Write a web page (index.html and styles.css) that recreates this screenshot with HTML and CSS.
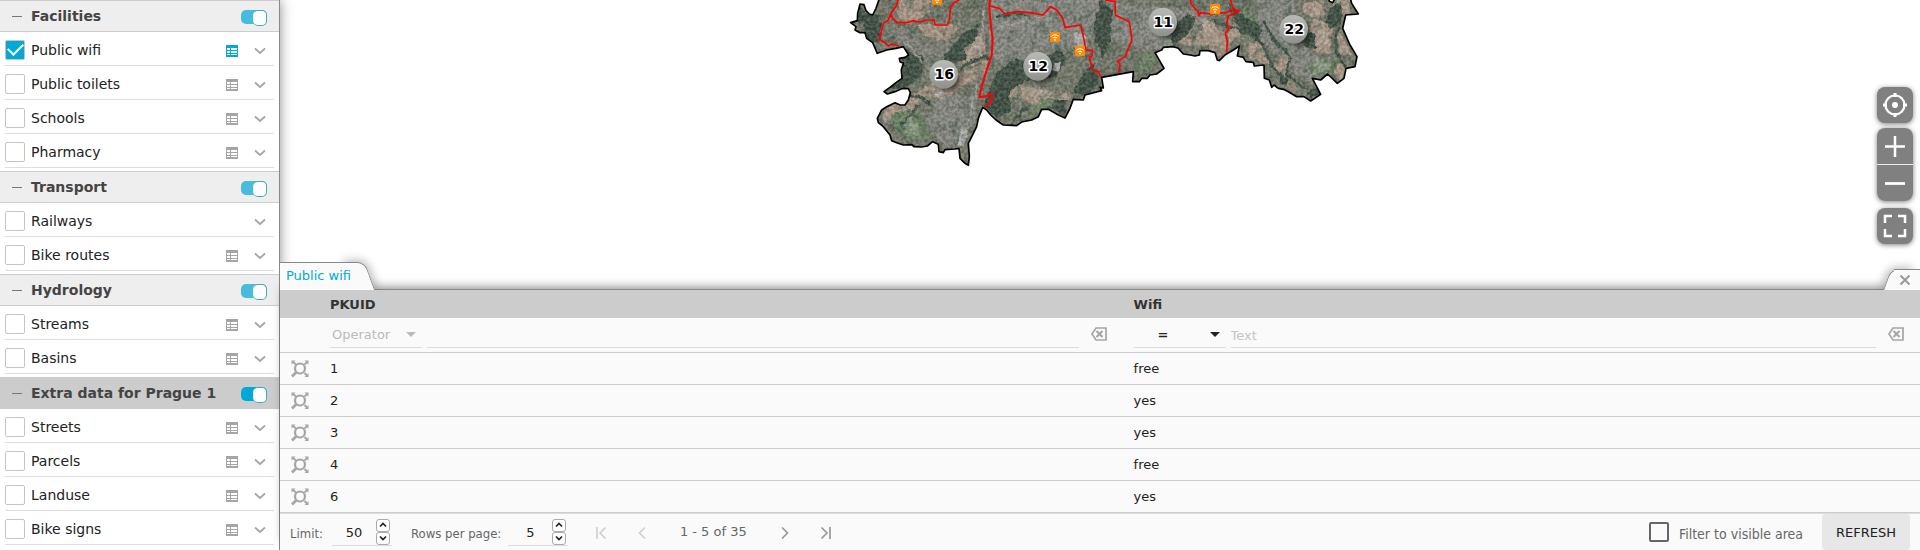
FILE: index.html
```html
<!DOCTYPE html>
<html lang="en">
<head>
<meta charset="utf-8">
<title>Prague map</title>
<link rel="stylesheet" href="styles.css">
</head>
<body>
<svg class="defs" aria-hidden="true">
  <symbol id="i-table" viewBox="0 0 12 12"><path d="M0 0h12v12H0zM1 3v2h3V3zM5 3v2h6V3zM1 6v2h3V6zM5 6v2h6V6zM1 9v1h3V9zM5 9v1h6V9z" fill="currentColor" fill-rule="evenodd"/></symbol>
  <symbol id="i-down" viewBox="0 0 12 8"><path d="M1 1.500l5 4.500 5-4.500" fill="none" stroke="currentColor" stroke-width="1.700"/></symbol>
  <symbol id="i-zoom" viewBox="0 0 18 18"><circle cx="9" cy="8.500" r="5" fill="none" stroke="currentColor" stroke-width="2.200"/><path d="M5.500 12L1 16.500" stroke="currentColor" stroke-width="2.800"/><path d="M.5.500h4L.5 4.500zM17.500.500h-4l4 4zM17.500 17h-4l4-4z" fill="currentColor"/><path d="M2 2l3 2.500M16.500 2l-3 2.500M16.500 16l-3-3" stroke="currentColor" stroke-width="2"/></symbol>
  <symbol id="i-clear" viewBox="0 0 16 14"><path d="M5 1h10v12H5L1 7z" fill="none" stroke="currentColor" stroke-width="1.700"/><path d="M5.500 4l6 6m0-6l-6 6" stroke="currentColor" stroke-width="2"/></symbol>
  <symbol id="i-caret-up" viewBox="0 0 8 6"><path d="M1 4.500l3-3 3 3" fill="none" stroke="currentColor" stroke-width="1.700"/></symbol>
  <symbol id="i-caret-down" viewBox="0 0 8 6"><path d="M1 1.500l3 3 3-3" fill="none" stroke="currentColor" stroke-width="1.700"/></symbol>
  <symbol id="i-first" viewBox="0 0 12 14"><path d="M2 1v12M10.500 1.500L5 7l5.500 5.500" fill="none" stroke="currentColor" stroke-width="1.500"/></symbol>
  <symbol id="i-prev" viewBox="0 0 12 14"><path d="M9 1.500L3.500 7 9 12.500" fill="none" stroke="currentColor" stroke-width="1.500"/></symbol>
  <symbol id="i-next" viewBox="0 0 12 14"><path d="M3 1.500L8.500 7 3 12.500" fill="none" stroke="currentColor" stroke-width="1.700"/></symbol>
  <symbol id="i-last" viewBox="0 0 12 14"><path d="M10 1v12M1.500 1.500L7 7l-5.500 5.500" fill="none" stroke="currentColor" stroke-width="1.700"/></symbol>
</svg>

<aside class="layers">
  <section class="group">
    <header class="group-head"><button class="fold" aria-label="Collapse"></button><h2>Facilities</h2><input class="toggle" type="checkbox" aria-label="Show Facilities" checked></header>
    <ul>
      <li class="layer"><input class="check" type="checkbox" id="l1" checked><label for="l1">Public wifi</label><button class="icon-btn active" aria-label="Table"><svg class="i12"><use href="#i-table"/></svg></button><button class="icon-btn" aria-label="More"><svg class="i-chev"><use href="#i-down"/></svg></button></li>
      <li class="layer"><input class="check" type="checkbox" id="l2"><label for="l2">Public toilets</label><button class="icon-btn" aria-label="Table"><svg class="i12"><use href="#i-table"/></svg></button><button class="icon-btn" aria-label="More"><svg class="i-chev"><use href="#i-down"/></svg></button></li>
      <li class="layer"><input class="check" type="checkbox" id="l3"><label for="l3">Schools</label><button class="icon-btn" aria-label="Table"><svg class="i12"><use href="#i-table"/></svg></button><button class="icon-btn" aria-label="More"><svg class="i-chev"><use href="#i-down"/></svg></button></li>
      <li class="layer"><input class="check" type="checkbox" id="l4"><label for="l4">Pharmacy</label><button class="icon-btn" aria-label="Table"><svg class="i12"><use href="#i-table"/></svg></button><button class="icon-btn" aria-label="More"><svg class="i-chev"><use href="#i-down"/></svg></button></li>
    </ul>
  </section>
  <section class="group">
    <header class="group-head"><button class="fold" aria-label="Collapse"></button><h2>Transport</h2><input class="toggle" type="checkbox" aria-label="Show Transport" checked></header>
    <ul>
      <li class="layer"><input class="check" type="checkbox" id="l5"><label for="l5">Railways</label><button class="icon-btn" aria-label="More"><svg class="i-chev"><use href="#i-down"/></svg></button></li>
      <li class="layer"><input class="check" type="checkbox" id="l6"><label for="l6">Bike routes</label><button class="icon-btn" aria-label="Table"><svg class="i12"><use href="#i-table"/></svg></button><button class="icon-btn" aria-label="More"><svg class="i-chev"><use href="#i-down"/></svg></button></li>
    </ul>
  </section>
  <section class="group">
    <header class="group-head"><button class="fold" aria-label="Collapse"></button><h2>Hydrology</h2><input class="toggle" type="checkbox" aria-label="Show Hydrology" checked></header>
    <ul>
      <li class="layer"><input class="check" type="checkbox" id="l7"><label for="l7">Streams</label><button class="icon-btn" aria-label="Table"><svg class="i12"><use href="#i-table"/></svg></button><button class="icon-btn" aria-label="More"><svg class="i-chev"><use href="#i-down"/></svg></button></li>
      <li class="layer"><input class="check" type="checkbox" id="l8"><label for="l8">Basins</label><button class="icon-btn" aria-label="Table"><svg class="i12"><use href="#i-table"/></svg></button><button class="icon-btn" aria-label="More"><svg class="i-chev"><use href="#i-down"/></svg></button></li>
    </ul>
  </section>
  <section class="group">
    <header class="group-head selected"><button class="fold" aria-label="Collapse"></button><h2>Extra data for Prague 1</h2><input class="toggle" type="checkbox" aria-label="Show Extra data for Prague 1" checked></header>
    <ul>
      <li class="layer"><input class="check" type="checkbox" id="l9"><label for="l9">Streets</label><button class="icon-btn" aria-label="Table"><svg class="i12"><use href="#i-table"/></svg></button><button class="icon-btn" aria-label="More"><svg class="i-chev"><use href="#i-down"/></svg></button></li>
      <li class="layer"><input class="check" type="checkbox" id="l10"><label for="l10">Parcels</label><button class="icon-btn" aria-label="Table"><svg class="i12"><use href="#i-table"/></svg></button><button class="icon-btn" aria-label="More"><svg class="i-chev"><use href="#i-down"/></svg></button></li>
      <li class="layer"><input class="check" type="checkbox" id="l11"><label for="l11">Landuse</label><button class="icon-btn" aria-label="Table"><svg class="i12"><use href="#i-table"/></svg></button><button class="icon-btn" aria-label="More"><svg class="i-chev"><use href="#i-down"/></svg></button></li>
      <li class="layer"><input class="check" type="checkbox" id="l12"><label for="l12">Bike signs</label><button class="icon-btn" aria-label="Table"><svg class="i12"><use href="#i-table"/></svg></button><button class="icon-btn" aria-label="More"><svg class="i-chev"><use href="#i-down"/></svg></button></li>
    </ul>
  </section>
</aside>

<main class="main">
  <div class="map">
    <svg class="city" viewBox="-60 0 1680 525" role="img" aria-label="Map of Prague districts">
      <defs>
        <path id="outline" d="M120-10L108 25 98 45 88 42 78 32 72 14 60 12 53 40 52 62 32 68 48 80 45 90 60 98 75 98 80 115 98 128 112 160 140 150 168 145 190 140 206 165 195 172 178 175 180 185 190 190 184 210 186 235 165 250 150 262 132 275 142 282 165 275 185 266 205 266 211 278 205 300 195 315 180 315 165 308 140 320 125 330 112 355 115 368 128 378 150 405 155 422 170 428 190 435 215 434 222 440 245 441 262 438 278 425 295 433 297 455 310 458 315 449 345 447 357 445 360 475 375 490 385 496 388 470 385 430 400 400 410 380 415 355 428 322 440 330 452 345 468 360 490 375 530 377 545 366 575 360 595 350 605 328 625 328 655 345 675 354 690 325 700 298 730 300 735 285 785 272 780 262 790 264 785 232 880 215 878 245 898 245 905 235 922 235 930 225 950 222 972 205 945 158 965 150 970 142 1000 140 1015 145 1030 162 1050 165 1065 168 1078 165 1080 152 1105 152 1125 158 1132 180 1138 182 1155 165 1180 150 1198 138 1192 168 1210 172 1218 185 1240 187 1243 198 1272 195 1273 235 1288 240 1295 262 1302 255 1315 265 1330 268 1345 275 1370 290 1392 290 1412 303 1442 283 1417 235 1442 240 1463 222 1492 250 1512 235 1518 205 1545 200 1551 170 1530 135 1508 85 1517 45 1555 42 1535 10 1530-10 1485-5 1478 8 1468 4 1465-10Z"/>
        <clipPath id="land"><use href="#outline"/></clipPath>
        <filter id="rough" x="-5%" y="-5%" width="110%" height="110%"><feTurbulence type="fractalNoise" baseFrequency=".05" numOctaves="4" seed="4" result="n"/><feDisplacementMap in="SourceGraphic" in2="n" scale="18" xChannelSelector="R" yChannelSelector="G"/></filter>
        <filter id="speck" x="0" y="0" width="100%" height="100%" color-interpolation-filters="sRGB"><feTurbulence type="fractalNoise" baseFrequency=".11" numOctaves="2" seed="8"/><feColorMatrix values="2.400 0 0 0 -.7  2.400 0 0 0 -.7  2.400 0 0 0 -.72  0 0 0 0 .15"/></filter>
        <filter id="mottle" x="0" y="0" width="100%" height="100%" color-interpolation-filters="sRGB"><feTurbulence type="fractalNoise" baseFrequency=".03" numOctaves="4" seed="21"/><feColorMatrix values="0 0 0 0 .25  0 0 0 0 .33  0 0 0 0 .26  5 0 0 0 -2.600"/></filter>
        <filter id="soft" x="-50%" y="-50%" width="200%" height="200%"><feGaussianBlur stdDeviation="7"/></filter>
        <linearGradient id="ball" x1="0" y1="0" x2="0" y2="1"><stop offset="0" stop-color="#b9bbb6"/><stop offset="1" stop-color="#8e908c"/></linearGradient>
        <g id="wifi"><rect width="30" height="30" rx="3" fill="#ff8a00"/><path d="M4 13q11-10 22 0M8.500 18q6.500-6 13 0" fill="none" stroke="#fff" stroke-width="3"/><circle cx="15" cy="23" r="2.800" fill="#fff"/></g>
      </defs>
      <g clip-path="url(#land)">
        <rect x="0" y="-10" width="1600" height="520" fill="#74786a"/>
        <g filter="url(#rough)">
          <path fill="#858780" d="M450 0h350l90 20 110 0 120 20-70 60-80 50-90-10-110-40-50 60-100-20-80 50-90 0zM300 290l110-10-10 100-80 60-70-60zM1250 0h110l20 120 50 60-10 70-90-50-70-90z"/>
          <path fill="#7f8076" d="M160 70l80 30 20 60-30 80-30-20 10-50-50-60zM250 130l130 0-20 60-100 20z"/>
          <path fill="#a89686" d="M180 0l90 0-10 50-60 20-30-20zM230 75l130-5-40 55-60-15zM380 140l50-50 10 70-40 40-40-10 0-30zM440 180l0 45-70 30-50 40-60 5-40-15 60-40 80-20zM210 290l40 0-30 40-60 20-30 20-5-40zM500 265l30-5 0 30-25 0zM540 255l90 20-30 45-50-20zM640 270l60 15-20 25-50-15zM1075 90l50-20 10 40-40 30-30-5zM1005 90l50 0 0 50-40-10zM1130 90l30 5 0 60-30 20-20-30zM1165 60l35 0 0 50-30 15zM1420 55l60 20-10 85-50-5-15-50zM1395 5l60 0-5 45-60-10zM1490 0l40 0 0 40-30 5zM1200 110l70 30 20 55-60-20zM1310 180l40-10-10 60-40-20zM1485 190l30 10-10 45-25-20zM1490 90l20 20 30 60-40-10zM1330 240l35 10 10 35-35-10z"/>
          <path fill="#b8a698" d="M285 215l60-10 20 30-90 40zM390 130l30-10 0 40-35 5zM595 260l40 15-15 30-30-20zM1430 85l40 10-5 40-35-10zM1085 60l40 0-5 35-30 5zM1415 20l30 5-5 25-30-5z"/>
          <path fill="#6b8163" d="M150 345l60-15 40 20 20 70-60 0-50-30zM600 290l50 10 20 40-60-15zM1410 190l50-20 40 15-20 30-60 20zM1200 20l50 30 10 50-50-30zM560 330l40-25 10 20-40 25zM900 160l60 0-20 40-50 20z"/>
          <path fill="#8a9982" d="M190 360l40-10 10 60-40-10zM1425 175l50-5-5 35-50 20zM1480 5l25 0-10 40-20-10zM980 110l30 0 0 25-40 5z"/>
          <path fill="#3a4b41" d="M75 50l50 20 0 40-30 30-25-50zM180 150l70 20 0 50-60 50-40-10 40-50-5-40zM60 10l20 30 40 5-10 30-60-5zM310 170l60-70 50-30-10 40-40 40 10 25-60 30zM470 215l60-40 60 20 70-50 20 40-40 50-90 10-40 30 0 60-40 20-40-40zM700 270l40-60 20-20 20 60-50 40zM780 0l40 30-10 90-20 60-30-80zM990 100l50-60 30 10-20 50-50 40zM640 300l45 0-15 45-30-10zM1390 100l35 0 0 50-30-10zM1400 275l40-15 0 25-30 10zM1470 25l35-20 0 60-30 20-20-20zM1320 220l25 10-5 30-20-15zM1160 0l40 40 70 50-20 30-60-45z"/>
          <path fill="none" stroke="#3c4f42" stroke-width="8" d="M1120 60l60 25 50 20 40 25 20 60 50 60M1500 60l-15 70 15 50 20 20M1270 60l30 60 50 50-10 50 60 50M210 285l40 10 20 20M360 210l30-25 60-15M510 380l50-60M185 375l50-60M470 50l50-10 40 5"/>
          <path fill="none" stroke="#a3a59d" stroke-width="4" d="M435 0l-10 90M425 90l-15 70M410 250l-25 130-15 60M540 265l150 30M460 90l120-40 100 0M190 120l60 70"/>
          <path fill="#b4b5b4" d="M360 395l22-5-8 50-20-5zM700 95l40 15 0 40-30-15zM640 185l25 0-12 32-12-6zM285 282l30-6 0 14-30 4z"/>
        </g>
        <rect x="0" y="-10" width="1600" height="520" filter="url(#mottle)" opacity=".4"/>
        <rect x="0" y="-10" width="1600" height="520" filter="url(#speck)"/>
      </g>
      <use href="#outline" fill="none" stroke="#000" stroke-width="5" stroke-linejoin="round"/>
      <g fill="none" stroke="#f00" stroke-width="5" stroke-linejoin="round">
        <path d="M175-5L170 15 152 42 158 55 170 68 200 68 220 62 235 66 260 60 283 60 285 75 322 75 328 60 332 20 342 8 358 0M152 42L145 60 130 70 125 90 118 118 135 128 145 138 155 132 178 138M450 18L478 25 495 42 530 35 570 38 608 45 632 20 650 30 668 55 675 82 722 75 730 110 738 150 758 152 755 170 748 172 758 210 775 215 782 232M795 0L825 5 826 45 868 65 876 120 855 170 832 185 840 190 837 218M1052-5L1052 10 1060 20 1074 35 1076 48 1082 38 1110 42 1155 38 1180 28 1170-5M1180 28L1198 33 1165 48 1160 70 1167 85 1156 100 1162 125 1160 155"/>
        <path stroke-width="6" d="M450-5L448 25 452 70 458 120 455 165 440 210 425 260 418 292 440 288 455 282 457 295 447 312 435 320"/>
      </g>
      <use href="#wifi" x="276" y="-16"/><use href="#wifi" x="630" y="96"/><use href="#wifi" x="705" y="138"/><use href="#wifi" x="1110" y="12"/>
      <g fill="#111" opacity=".6" filter="url(#soft)"><circle cx="324" cy="236" r="38"/><circle cx="606" cy="212" r="38"/><circle cx="981" cy="79" r="38"/><circle cx="1374" cy="101" r="38"/></g>
      <g fill="url(#ball)"><circle cx="311" cy="223" r="43"/><circle cx="593" cy="199" r="43"/><circle cx="968" cy="66" r="43"/><circle cx="1361" cy="88" r="43"/></g>
      <g class="count"><text x="313" y="238">16</text><text x="595" y="214">12</text><text x="970" y="80">11</text><text x="1363" y="102">22</text></g>
    </svg>

    <div class="controls">
      <button class="ctl" aria-label="Locate"><svg viewBox="0 0 24 24" class="i24"><circle cx="12" cy="12" r="9.500" fill="none" stroke="#fff" stroke-width="2.200"/><circle cx="12" cy="12" r="3" fill="#fff"/><path d="M12 0v4M12 20v4M0 12h4M20 12h4" stroke="#fff" stroke-width="3"/></svg></button>
      <div class="ctl-pair">
        <button class="ctl" aria-label="Zoom in"><svg viewBox="0 0 24 24" class="i24"><path d="M12 2v21M2 12.500h20" stroke="#fff" stroke-width="2.500"/></svg></button>
        <button class="ctl" aria-label="Zoom out"><svg viewBox="0 0 24 24" class="i24"><path d="M2 12.500h20" stroke="#fff" stroke-width="2.800"/></svg></button>
      </div>
      <button class="ctl" aria-label="Full screen"><svg viewBox="0 0 24 24" class="i24"><path d="M2 9V2h7M15 2h7v7M22 15v7h-7M9 22H2v-7" fill="none" stroke="#fff" stroke-width="2.500"/></svg></button>
    </div>
  </div>

  <section class="panel">
    <button class="tab">Public wifi</button>
    <button class="tab-close" aria-label="Close"><svg viewBox="0 0 12 12" class="i12"><path d="M1.500 1.500l9 9m0-9l-9 9" stroke="currentColor" stroke-width="2"/></svg></button>
    <table class="grid">
      <colgroup><col class="c-icon"><col class="c-id"><col></colgroup>
      <thead>
        <tr><th></th><th>PKUID</th><th>Wifi</th></tr>
        <tr class="filters">
          <td></td>
          <td><div class="filter"><span class="pick empty"><select aria-label="PKUID operator"><option>Operator</option></select></span><input type="text" aria-label="PKUID value"><button class="icon-btn clear" aria-label="Clear"><svg class="i-clear"><use href="#i-clear"/></svg></button></div></td>
          <td><div class="filter last"><span class="pick eq"><select aria-label="Wifi operator"><option>=</option></select></span><input type="text" placeholder="Text" aria-label="Wifi value"><button class="icon-btn clear" aria-label="Clear"><svg class="i-clear"><use href="#i-clear"/></svg></button></div></td>
        </tr>
      </thead>
      <tbody>
        <tr><td><button class="icon-btn zoom" aria-label="Zoom to"><svg class="i18"><use href="#i-zoom"/></svg></button></td><td>1</td><td>free</td></tr>
        <tr><td><button class="icon-btn zoom" aria-label="Zoom to"><svg class="i18"><use href="#i-zoom"/></svg></button></td><td>2</td><td>yes</td></tr>
        <tr><td><button class="icon-btn zoom" aria-label="Zoom to"><svg class="i18"><use href="#i-zoom"/></svg></button></td><td>3</td><td>yes</td></tr>
        <tr><td><button class="icon-btn zoom" aria-label="Zoom to"><svg class="i18"><use href="#i-zoom"/></svg></button></td><td>4</td><td>free</td></tr>
        <tr><td><button class="icon-btn zoom" aria-label="Zoom to"><svg class="i18"><use href="#i-zoom"/></svg></button></td><td>6</td><td>yes</td></tr>
      </tbody>
    </table>
    <footer class="pager">
      <label for="limit">Limit:</label>
      <div class="spin"><input id="limit" type="text" value="50"><span class="steps"><button aria-label="Up"><svg class="i8"><use href="#i-caret-up"/></svg></button><button aria-label="Down"><svg class="i8"><use href="#i-caret-down"/></svg></button></span></div>
      <label class="rows-label" for="rows">Rows per page:</label>
      <div class="spin"><input id="rows" type="text" value="5"><span class="steps"><button aria-label="Up"><svg class="i8"><use href="#i-caret-up"/></svg></button><button aria-label="Down"><svg class="i8"><use href="#i-caret-down"/></svg></button></span></div>
      <nav class="pages">
        <button class="off" aria-label="First page"><svg class="i14"><use href="#i-first"/></svg></button>
        <button class="off" aria-label="Previous page"><svg class="i14"><use href="#i-prev"/></svg></button>
        <span class="range">1 - 5 of 35</span>
        <button aria-label="Next page"><svg class="i14"><use href="#i-next"/></svg></button>
        <button aria-label="Last page"><svg class="i14"><use href="#i-last"/></svg></button>
      </nav>
      <input class="extent" type="checkbox" id="extent"><label class="extent-label" for="extent">Filter to visible area</label>
      <button class="refresh">REFRESH</button>
    </footer>
  </section>
</main>
</body>
</html>
```

FILE: styles.css
```css
* { box-sizing: border-box; }

body {
  display: flex;
  height: 100vh;
  margin: 0;
  overflow: hidden;
  background: #fff;
  color: #222;
  font: 13px/18px "DejaVu Sans", sans-serif;
}

button, input, select {
  margin: 0;
  padding: 0;
  border: 0;
  background: none;
  color: inherit;
  font: inherit;
}

svg { display: block; }
.defs { position: absolute; width: 0; height: 0; }
.i8 { width: 8px; height: 6px; }
.i12 { width: 12px; height: 12px; }
.i14 { width: 12px; height: 14px; }
.i18 { width: 18px; height: 18px; }
.i24 { width: 24px; height: 24px; }
.i-chev { width: 12px; height: 8px; }
.i-clear { width: 16px; height: 14px; }

/* Layer list */
.layers {
  flex: none;
  width: 280px;
  border-right: 1px solid #888;
  background: #fff;
  box-shadow: 0 0 12px rgba(0, 0, 0, .45);
  font-size: 14px;
}

.group { padding-bottom: 3px; }
.group ul { margin: 0; padding: 0 5px; list-style: none; }

.group-head {
  display: flex;
  align-items: center;
  height: 32px;
  padding: 0 12px;
  border: solid #ccc;
  border-width: 1px 0;
  background: #eee;
}

.group-head h2 {
  flex: 1;
  margin: 0 0 0 9px;
  color: #444;
  font-size: 14px;
  line-height: 18px;
}

.fold { width: 10px; height: 1px; background: #777; }
.selected { background: #ccc; }

.toggle {
  appearance: none;
  display: flex;
  justify-content: flex-end;
  width: 26px;
  height: 14px;
  margin-top: 2px;
  border-radius: 5px;
  background: #48bddb;
}

.toggle::before {
  content: "";
  width: 13px;
  height: 14px;
  border: 1px solid #3fa9c5;
  border-left-width: 0;
  border-radius: 5px;
  background: #fff;
}

.selected .toggle { background: #00a9d6; }

.layer {
  display: flex;
  align-items: center;
  height: 34px;
  border-bottom: 1px solid #ddd;
}

.layer label { flex: 1; margin-left: 6px; padding-top: 2px; }

.check {
  appearance: none;
  display: grid;
  width: 20px;
  height: 20px;
  margin-top: 2px;
  border: 1px solid #c4c4c4;
  border-radius: 2px;
  place-items: center;
}

.check:checked { background: #00a9d6; }

.check:checked::before {
  content: "";
  width: 13px;
  height: 7px;
  border: solid #fff;
  border-width: 0 0 2px 2px;
  transform: translateY(-2px) rotate(-45deg);
}

.icon-btn {
  display: grid;
  width: 28px;
  height: 24px;
  color: #a5a5a5;
  place-items: center;
}

.layer .icon-btn { padding-top: 4px; }
.active { color: #00a9d6; }

/* Map */
.main { display: flex; flex: 1; flex-direction: column; min-width: 0; }

.map {
  position: relative;
  display: flex;
  flex: 1;
  justify-content: center;
  min-height: 0;
}

.city { flex: none; width: 560px; height: 175px; }

.count text {
  fill: #000;
  stroke: #fff;
  stroke-width: 9px;
  stroke-linejoin: round;
  paint-order: stroke;
  font-size: 42px;
  font-weight: bold;
  text-anchor: middle;
}

.controls {
  position: absolute;
  top: 87px;
  right: 7px;
  display: flex;
  flex-direction: column;
  gap: 5px;
}

.ctl {
  display: grid;
  width: 36px;
  height: 36px;
  border-radius: 8px;
  background: #808080;
  box-shadow: 0 1px 5px rgba(0, 0, 0, .5);
  place-items: center;
}

.ctl-pair {
  display: grid;
  gap: 1px;
  margin-bottom: 2px;
  border-radius: 8px;
  background: #eee;
  box-shadow: 0 1px 5px rgba(0, 0, 0, .5);
}

.ctl-pair .ctl { box-shadow: none; }
.ctl-pair .ctl:first-child { border-radius: 8px 8px 0 0; }
.ctl-pair .ctl:last-child { border-radius: 0 0 8px 8px; }

/* Attribute table */
.panel {
  position: relative;
  z-index: 0;
  border-top: 1px solid #888;
  background: #fafafa;
  box-shadow: 0 -5px 10px -4px rgba(0, 0, 0, .5);
}

.tab, .tab-close {
  position: absolute;
  bottom: 100%;
  border-top: 1px solid #888;
  background: #fafafa;
}

.tab {
  left: 0;
  height: 28px;
  padding: 0 5px 2px 6px;
  color: #00a9d6;
}

.tab-close {
  right: 0;
  display: grid;
  width: 26px;
  height: 21px;
  padding-right: 4px;
  color: #999;
  place-items: center;
}

.tab::after, .tab-close::after {
  content: "";
  position: absolute;
  z-index: -1;
  top: -1px;
  bottom: 0;
  width: 24px;
  background: #fafafa;
}

.tab::after {
  right: -14px;
  border: solid #888;
  border-width: 1px 1px 0 0;
  border-radius: 0 8px 0 0;
  box-shadow: 3px -2px 8px rgba(0, 0, 0, .25);
  transform: skewX(20deg);
}

.tab-close::after {
  left: -7px;
  border: solid #888;
  border-width: 1px 0 0 1px;
  border-radius: 8px 0 0 0;
  box-shadow: -3px -2px 8px rgba(0, 0, 0, .25);
  transform: skewX(-20deg);
}

.grid {
  width: 100%;
  border-collapse: separate;
  border-spacing: 0;
  table-layout: fixed;
}

.c-icon { width: 50px; }
.c-id { width: 49%; }

.grid th {
  height: 28px;
  padding: 2px 0 0;
  background: #ccc;
  color: #333;
  text-align: left;
}

.grid td { height: 32px; padding: 0; border-bottom: 1px solid #ccc; }
.grid .filters td { height: 35px; }
.zoom { width: 40px; }

.filter { display: flex; align-items: center; gap: 5px; padding-right: 21px; }
.filter.last { padding-right: 10px; }

.filter input {
  flex: 1;
  min-width: 0;
  height: 26px;
  padding-top: 1px;
  border-bottom: 1px solid #ddd;
}

.filter input::placeholder { color: #c4c4c4; opacity: 1; }
.clear { margin-left: 1px; }
.clear svg { margin-bottom: 3px; }

.pick {
  display: flex;
  align-items: center;
  width: 92px;
  height: 26px;
  padding-right: 6px;
  border-bottom: 1px solid #ddd;
}

.pick select { flex: 1; appearance: none; padding-left: 2px; }

.pick::after {
  content: "";
  border: solid transparent;
  border-width: 5px 5px 0;
  border-top-color: currentColor;
}

.empty { color: #bbb; }
.eq select { font-weight: bold; padding-left: 24px; }

/* Pager */
.pager {
  display: flex;
  align-items: center;
  height: 37px;
  padding: 0 10px;
  border-top: 1px solid #ddd;
  color: #666;
}

.pager label {
  padding-top: 3px;
  font-family: "DejaVu Sans Condensed", "DejaVu Sans", sans-serif;
  font-stretch: condensed;
}

.rows-label { margin-left: 19px; }

.spin {
  display: flex;
  align-items: center;
  width: 60px;
  height: 28px;
  margin-left: 9px;
  border-bottom: 1px solid #ddd;
  color: #222;
}

.rows-label + .spin { margin-left: 7px; }
.spin input { width: 44px; padding-top: 2px; text-align: center; }
.steps { display: grid; }

.steps button {
  display: grid;
  width: 14px;
  height: 13px;
  border: 1px solid #aaa;
  border-radius: 3px;
  background: #fff;
  place-items: center;
}

.pages { display: flex; align-items: center; margin-left: 12px; }

.pages button {
  display: grid;
  width: 41px;
  height: 28px;
  padding-top: 2px;
  color: #999;
  place-items: center;
}

.pages .off { color: #ccc; }
.range { width: 102px; text-align: center; }

.extent {
  appearance: none;
  width: 20px;
  height: 20px;
  margin: 0 10px 0 auto;
  border: 2px solid #666;
  border-radius: 2px;
}

.pager .extent-label { font-size: 14px; }

.refresh {
  width: 88px;
  height: 36px;
  margin-left: 19px;
  padding-top: 2px;
  border-radius: 4px;
  background: #e7e7e7;
  color: #222;
}
```
